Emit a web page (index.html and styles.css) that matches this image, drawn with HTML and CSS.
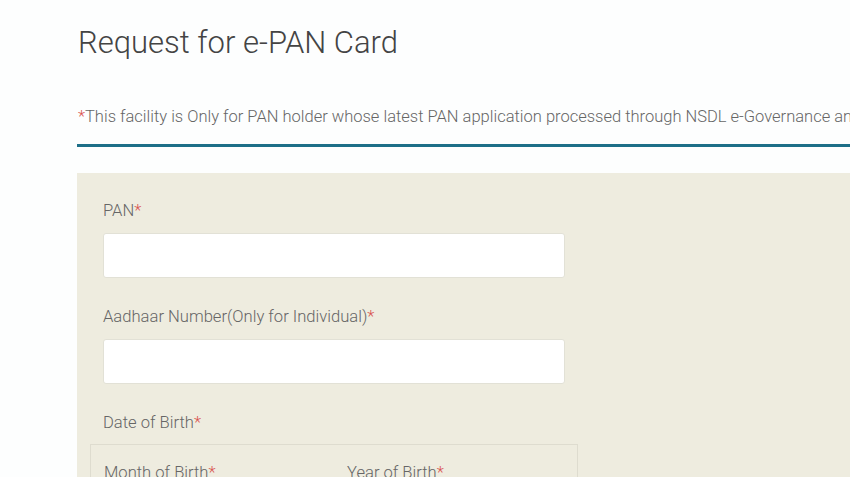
FILE: index.html
```html
<!DOCTYPE html>
<html lang="en">
<head>
    <meta charset="UTF-8">
    <meta name="viewport" content="width=device-width, initial-scale=1.0">
    <title>Request for e-PAN Card</title>
    <link rel="stylesheet" href="styles.css">
</head>
<body>

    <div class="page">
        <h1>Request for e-PAN Card</h1>
        <p class="note"><span class="req">*</span>This facility is Only for PAN holder whose latest PAN application processed through NSDL e-Governance and PAN is allotted</p>

        <div class="panel">
            <label class="field-label">PAN<span class="req">*</span></label>
            <input class="field" type="text">

            <label class="field-label">Aadhaar Number(Only for Individual)<span class="req">*</span></label>
            <input class="field" type="text">

            <label class="field-label">Date of Birth<span class="req">*</span></label>
            <div class="dob-box">
                <div class="dob-col">Month of Birth<span class="req">*</span></div>
                <div class="dob-col">Year of Birth<span class="req">*</span></div>
            </div>
        </div>
    </div>

</body>
</html>
```

FILE: styles.css
```css
* { margin: 0; padding: 0; box-sizing: border-box; }
body {
    background-color: #fdfefe;
    color: #555;
    font-family: 'Roboto', 'Liberation Sans', sans-serif;
    font-weight: 300;
    overflow: hidden;
}
.page {
    padding: 24px 0 0 77px;
    width: 1200px;
}
h1 {
    font-size: 31px;
    font-weight: 300;
    color: #444;
    line-height: 38px;
    padding-left: 1px;
}
.note {
    margin-top: 45px;
    font-size: 16.5px;
    line-height: 20px;
    color: #666;
    white-space: nowrap;
    padding-left: 1px;
    padding-bottom: 17px;
    border-bottom: 3px solid #1d6f88;
}
.req { color: #d9534f; }
.panel {
    margin-top: 26px;
    background-color: #eeecdf;
    padding: 28px 0 40px 26px;
    display: flex;
    flex-direction: column;
    align-items: flex-start;
}
.field-label {
    font-size: 16.6px;
    line-height: 20px;
    color: #666;
}
.field {
    display: block;
    flex-shrink: 0;
    width: 462px;
    height: 45px;
    margin: 12px 0 29px;
    border: 1px solid #e2e1d6;
    border-radius: 3px;
    background-color: #fff;
}
.dob-box {
    margin: 11px 0 0 -13px;
    width: 488px;
    height: 80px;
    border: 1px solid #dedccf;
    display: flex;
    padding: 18px 0 0 13px;
}
.dob-col {
    flex-shrink: 0;
    width: 243px;
    font-size: 16.6px;
    line-height: 20px;
    color: #666;
}
```
